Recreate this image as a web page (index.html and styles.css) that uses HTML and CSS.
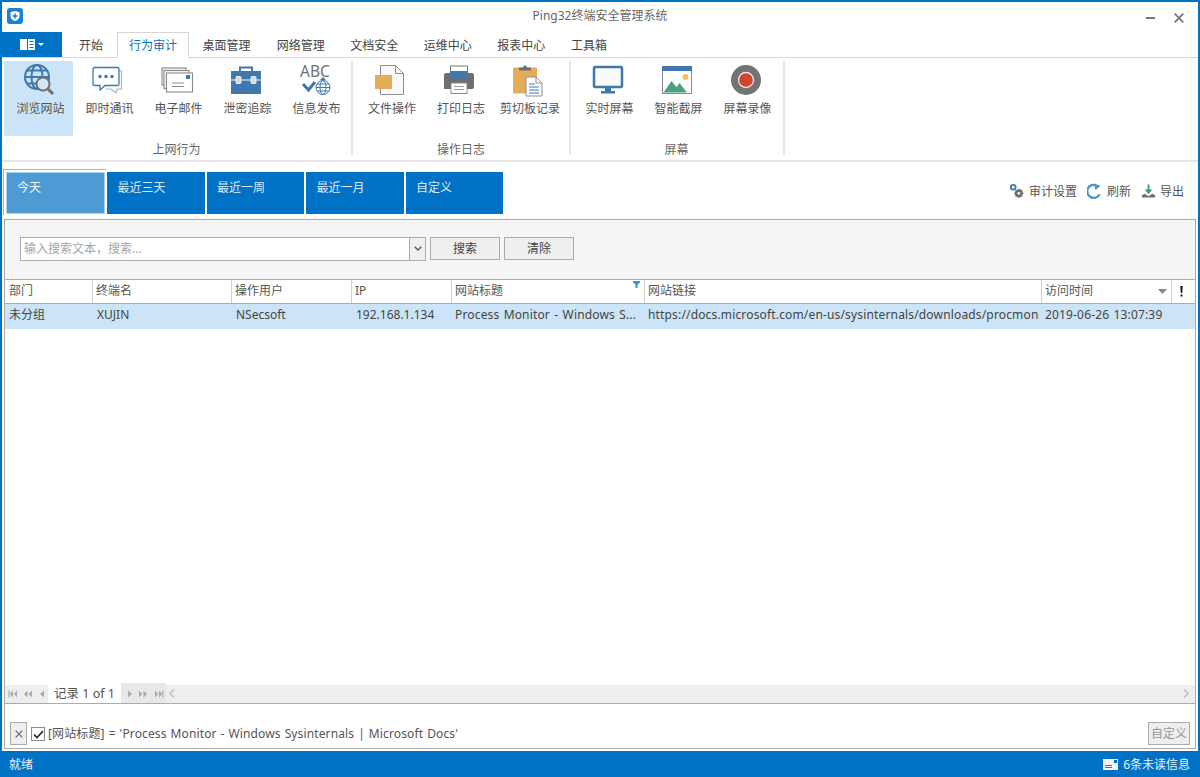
FILE: index.html
```html
<!DOCTYPE html>
<html lang="zh-CN">
<head>
<meta charset="utf-8">
<title>Ping32终端安全管理系统</title>
<link rel="stylesheet" href="styles.css">
</head>
<body>
<div class="window">
  <header class="titlebar">
    <svg class="logo" viewBox="0 0 16 16"><rect width="16" height="16" rx="3" fill="#1f7fd0"/><path d="M8 3l4.500 1.300v4c0 2.300-2 3.800-4.500 4.700-2.500-.9-4.500-2.400-4.500-4.700v-4z" fill="#fff"/><path d="M8 5.500v5M5.500 8h5" stroke="#1f7fd0" stroke-width="1.600"/></svg>
    <div class="title">Ping32终端安全管理系统</div>
    <div class="winbtns">
      <svg class="minbtn" viewBox="0 0 9 2"><rect width="9" height="2" fill="#777"/></svg>
      <svg class="closebtn" viewBox="0 0 10 10"><path d="M.7.700l8.600 8.600M9.300.700L.7 9.300" stroke="#777" stroke-width="1.800"/></svg>
    </div>
  </header>

  <nav class="tabs">
    <div class="filebtn">
      <svg viewBox="0 0 15 11" class="fileicon"><path d="M0 0h7v11H0z" fill="#fff"/><path d="M8 0h7v11H8z" fill="#fff"/><path d="M9.500 2.500h4M9.500 5.500h4M9.500 8.500h4" stroke="#0072c6"/></svg>
      <svg viewBox="0 0 6 3" class="caret"><path d="M0 0h6L3 3z" fill="#fff"/></svg>
    </div>
    <div class="tab t1">开始</div>
    <div class="tab active">行为审计</div>
    <div class="tab t3">桌面管理</div>
    <div class="tab t4">网络管理</div>
    <div class="tab t4">文档安全</div>
    <div class="tab t4">运维中心</div>
    <div class="tab t4">报表中心</div>
    <div class="tab t8">工具箱</div>
  </nav>

  <section class="ribbon">
    <div class="group g1">
      <div class="items">
        <div class="item selected">
          <svg class="ico" viewBox="0 0 32 32"><g fill="none" stroke="#3f78ad" stroke-width="2"><circle cx="14" cy="13" r="12"/><ellipse cx="14" cy="13" rx="5.500" ry="12"/><path d="M2 13h24M4 6.500h20M4 19.500h20"/></g><circle cx="20" cy="20" r="6.500" fill="#d5e6f4" stroke="#6f6f6f" stroke-width="2"/><path d="M25 25l5 5" stroke="#6f6f6f" stroke-width="3"/></svg>
          <span>浏览网站</span>
        </div>
        <div class="item">
          <svg class="ico" viewBox="0 0 32 32"><path d="M22 7h7.500v18H25l-1 4-5-4h-5" fill="#fff" stroke="#b5b5b5" stroke-width="1.200"/><path d="M2.500 3.500h23a1.500 1.500 0 0 1 1.500 1.500v15a1.500 1.500 0 0 1-1.500 1.500H13l-5 4.500v-4.500H2.500A1.500 1.500 0 0 1 1 20V5a1.500 1.500 0 0 1 1.500-1.500z" fill="#fff" stroke="#3f78ad" stroke-width="1.300"/><circle cx="8" cy="12.500" r="1.700" fill="#3f78ad"/><circle cx="14" cy="12.500" r="1.700" fill="#3f78ad"/><circle cx="20" cy="12.500" r="1.700" fill="#3f78ad"/></svg>
          <span>即时通讯</span>
        </div>
        <div class="item">
          <svg class="ico" viewBox="0 0 32 32"><g fill="#f4f4f4" stroke="#8a8a8a" stroke-width="1.100"><rect x="1" y="4" width="24" height="17"/><rect x="3" y="6.500" width="25" height="18"/></g><rect x="5.500" y="9" width="26" height="19" fill="#fff" stroke="#8a8a8a" stroke-width="1.100"/><rect x="25" y="11" width="4" height="4" fill="#3f78ad"/><path d="M11 19h12M11 22.500h12" stroke="#8a8a8a" stroke-width="1.200"/></svg>
          <span>电子邮件</span>
        </div>
        <div class="item">
          <svg class="ico" viewBox="0 0 32 32"><path d="M10 7V3.500h12V7" fill="none" stroke="#3f78ad" stroke-width="2"/><rect x="1" y="7" width="30" height="23" fill="#3f78ad"/><path d="M1 16h30" stroke="#fff" stroke-width="1"/><rect x="6" y="12.500" width="5" height="7" rx="1" fill="#d9d9d9" stroke="#fff" stroke-width=".8"/><rect x="21" y="12.500" width="5" height="7" rx="1" fill="#d9d9d9" stroke="#fff" stroke-width=".8"/></svg>
          <span>泄密追踪</span>
        </div>
        <div class="item">
          <svg class="ico" viewBox="0 0 32 32"><text x="16" y="13" class="abctext">ABC</text><path d="M4 20l5.500 6L16 18" fill="none" stroke="#3f78ad" stroke-width="3"/><path d="M21 16l3-3 3 3z" fill="#3f78ad"/><g fill="none" stroke="#3f78ad"><circle cx="24" cy="23.500" r="7"/><ellipse cx="24" cy="23.500" rx="3" ry="7"/><path d="M17 23.500h14M18 20h12M18 27h12"/></g></svg>
          <span>信息发布</span>
        </div>
      </div>
      <div class="grouplabel">上网行为</div>
    </div>
    <div class="group g2">
      <div class="items">
        <div class="item">
          <svg class="ico" viewBox="0 0 32 32"><path d="M6.500 1.500h15l8 8v21h-23z" fill="#fafafa" stroke="#8f8f8f" stroke-width="1"/><path d="M21.500 1.500v8h8" fill="none" stroke="#8f8f8f"/><rect x="1" y="11" width="17" height="14" fill="#e5ad59"/></svg>
          <span>文件操作</span>
        </div>
        <div class="item">
          <svg class="ico" viewBox="0 0 32 32"><rect x="7.500" y="2" width="17" height="7" fill="#fff" stroke="#777"/><path d="M3 9h26a2 2 0 0 1 2 2v12a2 2 0 0 1-2 2H1V11a2 2 0 0 1 2-2z" fill="#6f6f6f"/><rect x="7" y="7" width="18" height="7.500" fill="#3f78ad"/><rect x="8" y="19" width="16" height="10.500" fill="#fff" stroke="#8a8a8a"/><path d="M11 22.500h10M11 25.500h10" stroke="#9a9a9a"/></svg>
          <span>打印日志</span>
        </div>
        <div class="item">
          <svg class="ico" viewBox="0 0 32 32"><rect x="1" y="3.500" width="24" height="26" rx="1" fill="#e5ad59"/><path d="M7 6.500V3.500h3.500L13 1l2.500 2.500H19v3z" fill="#6f6f6f"/><path d="M14 13h10l6 6v13H14z" fill="#fff" stroke="#8f8f8f"/><path d="M24 13v6h6" fill="none" stroke="#8f8f8f"/><path d="M17 20h6M17 23h10M17 26h10M17 29h10" stroke="#3f78ad" stroke-width="1.200"/></svg>
          <span>剪切板记录</span>
        </div>
      </div>
      <div class="grouplabel">操作日志</div>
    </div>
    <div class="group g3">
      <div class="items">
        <div class="item">
          <svg class="ico" viewBox="0 0 32 32"><rect x="2" y="3" width="28" height="20" rx="1" fill="#fafafa" stroke="#3f78ad" stroke-width="2.500"/><path d="M13 24h6v3.500h-6z" fill="#3f78ad"/><rect x="9" y="27" width="14" height="2.500" fill="#3f78ad"/></svg>
          <span>实时屏幕</span>
        </div>
        <div class="item">
          <svg class="ico" viewBox="0 0 32 32"><rect x="1.500" y="2.500" width="29" height="27" fill="#fff" stroke="#8a8a8a"/><rect x="1" y="2" width="30" height="5" fill="#3f78ad"/><circle cx="24.500" cy="13" r="3" fill="#efc163"/><path d="M2.500 28.500L10.500 17l5 6 3-4 7.500 9.500z" fill="#4aa37f"/></svg>
          <span>智能截屏</span>
        </div>
        <div class="item">
          <svg class="ico" viewBox="0 0 32 32"><circle cx="16" cy="16" r="15" fill="#737373"/><circle cx="16" cy="16" r="7.500" fill="#d2452d" stroke="#f1e4e1" stroke-width="1.300"/></svg>
          <span>屏幕录像</span>
        </div>
      </div>
      <div class="grouplabel">屏幕</div>
    </div>
  </section>

  <section class="rangebar">
    <div class="ranges">
      <div class="range current">今天</div>
      <div class="range">最近三天</div>
      <div class="range">最近一周</div>
      <div class="range">最近一月</div>
      <div class="range">自定义</div>
    </div>
    <div class="actions">
      <div class="action">
        <svg viewBox="0 0 16 16"><circle cx="4.500" cy="4" r="2.500" fill="none" stroke="#3f78ad" stroke-width="2"/><circle cx="10.500" cy="10.500" r="3" fill="none" stroke="#6f6f6f" stroke-width="2.500"/><path d="M10.500 5.500v10M5.500 10.500h10M7 7l7 7M14 7l-7 7" stroke="#6f6f6f" stroke-width="1.300"/><circle cx="10.500" cy="10.500" r="1.400" fill="#fff"/></svg>
        <span>审计设置</span>
      </div>
      <div class="action a2">
        <svg viewBox="0 0 16 16"><path d="M13.500 11.500A7 7 0 1 1 9 1.600" fill="none" stroke="#4a94c4" stroke-width="2.400"/><path d="M7.500 0l7 2.500L9 7z" fill="#4a94c4"/></svg>
        <span>刷新</span>
      </div>
      <div class="action a3">
        <svg viewBox="0 0 16 16"><path d="M8 1v8" stroke="#3f9a6e" stroke-width="2"/><path d="M4 6.500h8L8 11.500z" fill="#3f9a6e"/><path d="M1 15v-2.500l3-1.500 4 2.500 4-2.500 3 1.500V15z" fill="#6f6f6f"/></svg>
        <span>导出</span>
      </div>
    </div>
  </section>

  <section class="panel">
    <div class="searchbar">
      <div class="combo">
        <div class="placeholder">输入搜索文本，搜索...</div>
        <div class="dropdown"><svg viewBox="0 0 8 5"><path d="M.7.700L4 4l3.300-3.300" fill="none" stroke="#555" stroke-width="1.300"/></svg></div>
      </div>
      <div class="btn">搜索</div>
      <div class="btn">清除</div>
    </div>

    <div class="gridrow head">
      <div class="cell">部门</div>
      <div class="cell">终端名</div>
      <div class="cell">操作用户</div>
      <div class="cell">IP</div>
      <div class="cell filtered">网站标题<svg class="funnel" viewBox="0 0 7 7"><path d="M0 0h7v1.500L4.500 3.500V7h-2V3.500L0 1.500z" fill="#2a9ad6"/></svg></div>
      <div class="cell">网站链接</div>
      <div class="cell sorted">访问时间<svg class="sortarrow" viewBox="0 0 9 5"><path d="M0 0h9L4.500 5z" fill="#888"/></svg></div>
      <div class="cell bang"><svg viewBox="0 0 3 11"><path d="M.3 0h2.400L2.200 7H.8z" fill="#111"/><rect x=".6" y="8.500" width="1.800" height="2" fill="#111"/></svg></div>
    </div>
    <div class="gridrow data">
      <div class="cell">未分组</div>
      <div class="cell">XUJIN</div>
      <div class="cell">NSecsoft</div>
      <div class="cell">192.168.1.134</div>
      <div class="cell latin">Process Monitor - Windows S...</div>
      <div class="cell latin">https://docs.microsoft.com/en-us/sysinternals/downloads/procmon</div>
      <div class="cell latin wide">2019-06-26 13:07:39</div>
    </div>
    <div class="gridbody"></div>

    <div class="pager">
      <div class="pagerbtns">
        <svg viewBox="0 0 9 7"><path d="M.5 0h1.200v7H.5zM5 0v7L2 3.500zM9 0v7L6 3.500z" fill="#aaa"/></svg>
        <svg viewBox="0 0 9 7"><path d="M4.500 0v7L1 3.500zM9 0v7L5.500 3.500z" fill="#aaa"/></svg>
        <svg class="single" viewBox="0 0 4 7"><path d="M4 0v7L0 3.500z" fill="#aaa"/></svg>
      </div>
      <div class="pagerlabel">记录 1 of 1</div>
      <div class="pagerbtns after">
        <svg class="single" viewBox="0 0 4 7"><path d="M0 0v7l4-3.500z" fill="#aaa"/></svg>
        <svg viewBox="0 0 9 7"><path d="M0 0v7l3.500-3.500zM4.500 0v7L8 3.500z" fill="#aaa"/></svg>
        <svg viewBox="0 0 9 7"><path d="M0 0v7l3-3.500zM4 0v7l3-3.500zM7.300 0h1.200v7H7.300z" fill="#aaa"/></svg>
      </div>
      <svg class="scrollarrow" viewBox="0 0 6 9"><path d="M5 .5L1 4.500l4 4" fill="none" stroke="#bbb" stroke-width="1.300"/></svg>
      <svg class="scrollarrow right" viewBox="0 0 6 9"><path d="M1 .5l4 4-4 4" fill="none" stroke="#bbb" stroke-width="1.300"/></svg>
    </div>

    <div class="filterbar">
      <div class="fclose"><svg viewBox="0 0 8 8"><path d="M.7.700l6.600 6.600M7.300.700L.7 7.300" stroke="#666" stroke-width="1.200"/></svg></div>
      <div class="fcheck"><svg viewBox="0 0 11 9"><path d="M1 4.500l3 3L10 1" fill="none" stroke="#222" stroke-width="1.600"/></svg></div>
      <div class="ftext">[网站标题] = 'Process Monitor - Windows Sysinternals | Microsoft Docs'</div>
      <div class="fcustom">自定义</div>
    </div>
  </section>

  <footer class="status">
    <div>就绪</div>
    <div class="unread">
      <svg viewBox="0 0 15 11"><rect width="15" height="11" fill="#f4f4f4"/><rect x="11" y="1" width="3" height="3" fill="#0072c6"/><path d="M2 6.500h7M2 8.500h7" stroke="#666"/></svg>
      <span>6条未读信息</span>
    </div>
  </footer>
</div>
</body>
</html>
```
FILE: styles.css
```css
* { box-sizing: border-box; }
html, body { margin: 0; padding: 0; }
body {
  font-family: "Noto Sans", "Noto Sans CJK SC", sans-serif;
  font-size: 12px;
  color: #555;
  background: #fff;
}
.window {
  width: 1200px;
  height: 777px;
  display: flex;
  flex-direction: column;
  border-top: 2px solid #0072c6;
  border-left: 2px solid #0072c6;
  border-right: 2px solid #0072c6;
  overflow: hidden;
}
.titlebar {
  height: 29px;
  flex: none;
  position: relative;
  display: flex;
  align-items: center;
  justify-content: center;
}
.logo { position: absolute; left: 5px; top: 6px; width: 16px; height: 16px; }
.title { color: #666; line-height: 16px; margin-top: -2px; }
.winbtns { position: absolute; right: 14px; top: 11px; display: flex; align-items: center; gap: 19px; }
.minbtn { width: 9px; height: 2px; }
.closebtn { width: 10px; height: 10px; }

.tabs {
  height: 27px;
  flex: none;
  display: flex;
  border-bottom: 1px solid #d6d6d6;
}
.filebtn {
  width: 60px;
  height: 25px;
  margin-top: 1px;
  background: #0072c6;
  display: flex;
  align-items: center;
  justify-content: center;
  gap: 3px;
}
.fileicon { width: 15px; height: 11px; }
.caret { width: 6px; height: 3px; }
.tab {
  height: 27px;
  line-height: 29px;
  text-align: center;
  color: #444;
}
.t1 { width: 55px; padding-left: 3px; }
.active {
  width: 72px;
  height: 26px;
  margin-top: 1px;
  color: #0072c6;
  background: #fff;
  border: 1px solid #d6d6d6;
  border-bottom: 1px solid #fff;
  line-height: 26px;
}
.t3 { width: 75px; }
.t4 { width: 73.500px; }
.t8 { width: 62px; }

.ribbon {
  height: 104px;
  flex: none;
  display: flex;
  padding: 3px 0 0 2px;
  border-bottom: 2px solid #e6e6e6;
}
.group {
  display: flex;
  flex-direction: column;
  align-items: center;
  border-right: 2px solid #e8e8e8;
  height: 94px;
}
.g1 { padding-right: 2px; margin-right: 2.500px; }
.g2 { padding-right: 6.500px; margin-right: 2px; }
.g3 { padding-right: 3px; }
.items { display: flex; }
.item {
  width: 69px;
  height: 75px;
  display: flex;
  flex-direction: column;
  align-items: center;
  padding-top: 3px;
  color: #555;
}
.item span { line-height: 16px; margin-top: 5px; padding-left: 4px; white-space: nowrap; }
.selected { background: #cce4f7; }
.ico { width: 32px; height: 32px; display: block; overflow: visible; }
.abctext { font-size: 15.500px; fill: #707070; text-anchor: middle; }
.grouplabel { line-height: 16px; margin-top: 6px; color: #666; }
.g2 .grouplabel { padding-left: 4px; }

.rangebar {
  height: 57px;
  flex: none;
  display: flex;
  justify-content: space-between;
  padding: 10px 0 0 4px;
}
.ranges { display: flex; gap: 2px; height: 42px; }
.range {
  width: 97.500px;
  height: 42px;
  background: #0072c6;
  color: #d8ebf8;
  padding: 8px 0 0 10.500px;
  line-height: 16px;
}
.current {
  width: 99px;
  background: #4d9ad4;
  border: 1px solid #a9d0ec;
  box-shadow: 0 0 0 2px #fff, -1px -1px 0 2px #b0b0b0;
  color: #eef6fc;
  padding: 7px 0 0 10px;
}
.actions { display: flex; align-items: center; height: 38px; padding-right: 14px; }
.action { display: flex; align-items: center; gap: 5px; color: #555; }
.action svg { width: 15px; height: 16px; }
.a2 { margin-left: 10px; }
.a3 { margin-left: 10px; gap: 4px; }

.panel {
  flex: 1;
  margin: 0 2px 2px;
  border: 1px solid #ababab;
  display: flex;
  flex-direction: column;
  min-height: 0;
}
.searchbar {
  height: 59px;
  flex: none;
  background: #f5f5f5;
  display: flex;
  align-items: center;
  padding: 0 0 2px 15px;
  gap: 4px;
}
.combo {
  width: 406px;
  height: 24px;
  display: flex;
  background: #fff;
  border: 1px solid #ababab;
}
.placeholder { flex: 1; color: #a5a5a5; line-height: 22px; padding-left: 3px; }
.dropdown {
  width: 16px;
  background: #f0f0f0;
  border-left: 1px solid #ababab;
  display: flex;
  align-items: center;
  justify-content: center;
}
.dropdown svg { width: 8px; height: 5px; }
.btn {
  width: 70px;
  height: 23px;
  line-height: 22px;
  text-align: center;
  color: #444;
  background: #efefef;
  border: 1px solid #ababab;
}
.gridrow {
  display: grid;
  grid-template-columns: 88px 139px 120px 100px 193px 397px 130px 23px;
  flex: none;
}
.head { height: 25px; border-top: 1px solid #ababab; border-bottom: 1px solid #ababab; }
.head .cell {
  border-right: 1px solid #d0d0d0;
  padding-left: 3px;
  line-height: 21px;
  position: relative;
  color: #555;
}
.head .cell:first-child { padding-left: 4px; }
.cell { white-space: nowrap; overflow: hidden; }
.data { height: 25px; background: #cce4f7; }
.data .cell { padding-left: 4px; line-height: 22px; color: #444; }
.data .latin { padding-left: 3px; letter-spacing: .16px; word-spacing: 1px; }
.data .wide { grid-column: span 2; }
.funnel { position: absolute; right: 4px; top: 1px; width: 7px; height: 7px; }
.sortarrow { position: absolute; right: 4px; top: 9px; width: 9px; height: 5px; }
.bang { display: flex; align-items: center; justify-content: center; padding: 0 4px 0 0 !important; border-right: none !important; }
.bang svg { width: 3px; height: 11px; }
.gridbody { flex: 1; background: #fff; }
.pager {
  height: 19px;
  flex: none;
  border-bottom: 1px solid #ababab;
  background: #eee;
  display: flex;
  position: relative;
  align-items: stretch;
}
.pagerbtns { display: flex; align-items: center; gap: 6px; padding-left: 3px; width: 43px; }
.pagerbtns svg { width: 9px; height: 8px; }
.pagerbtns svg.single { width: 4px; margin-left: 2px; }
.pagerbtns.after {
  padding-left: 5px;
  width: 45px;
  gap: 7px;
  background: #e8e8e8;
  margin-top: -2px;
  padding-top: 2px;
}
.pagerlabel { width: 73px; background: #fff; color: #555; line-height: 22px; padding-left: 6px; margin-top: -2px; height: 20px; font-size: 12.500px; }
.scrollarrow { position: absolute; left: 164px; top: 4px; width: 6px; height: 9px; }
.scrollarrow.right { left: auto; right: 6px; }
.filterbar {
  height: 44px;
  flex: none;
  display: flex;
  align-items: flex-start;
  padding: 18px 5px 0 5px;
}
.fclose {
  width: 17px;
  height: 23px;
  background: #eee;
  border: 1px solid #ababab;
  display: flex;
  align-items: center;
  justify-content: center;
}
.fclose svg { width: 8px; height: 8px; }
.fcheck {
  width: 14px;
  height: 14px;
  margin: 5px 0 0 4px;
  border: 1px solid #8a8a8a;
  background: #fff;
  display: flex;
  align-items: center;
  justify-content: center;
}
.fcheck svg { width: 11px; height: 9px; }
.ftext { flex: 1; margin-left: 3px; line-height: 24px; color: #555; white-space: nowrap; letter-spacing: .13px; word-spacing: .7px; }
.fcustom {
  width: 42px;
  height: 23px;
  line-height: 21px;
  text-align: center;
  background: #eee;
  border: 1px solid #ababab;
  color: #999;
}
.status {
  height: 26px;
  flex: none;
  margin: 0 -2px;
  background: #0072c6;
  color: #e8f3fb;
  display: flex;
  align-items: center;
  justify-content: space-between;
  padding: 0 10px 0 9px;
}
.unread { display: flex; align-items: center; gap: 5px; }
.unread svg { width: 15px; height: 11px; }
```
